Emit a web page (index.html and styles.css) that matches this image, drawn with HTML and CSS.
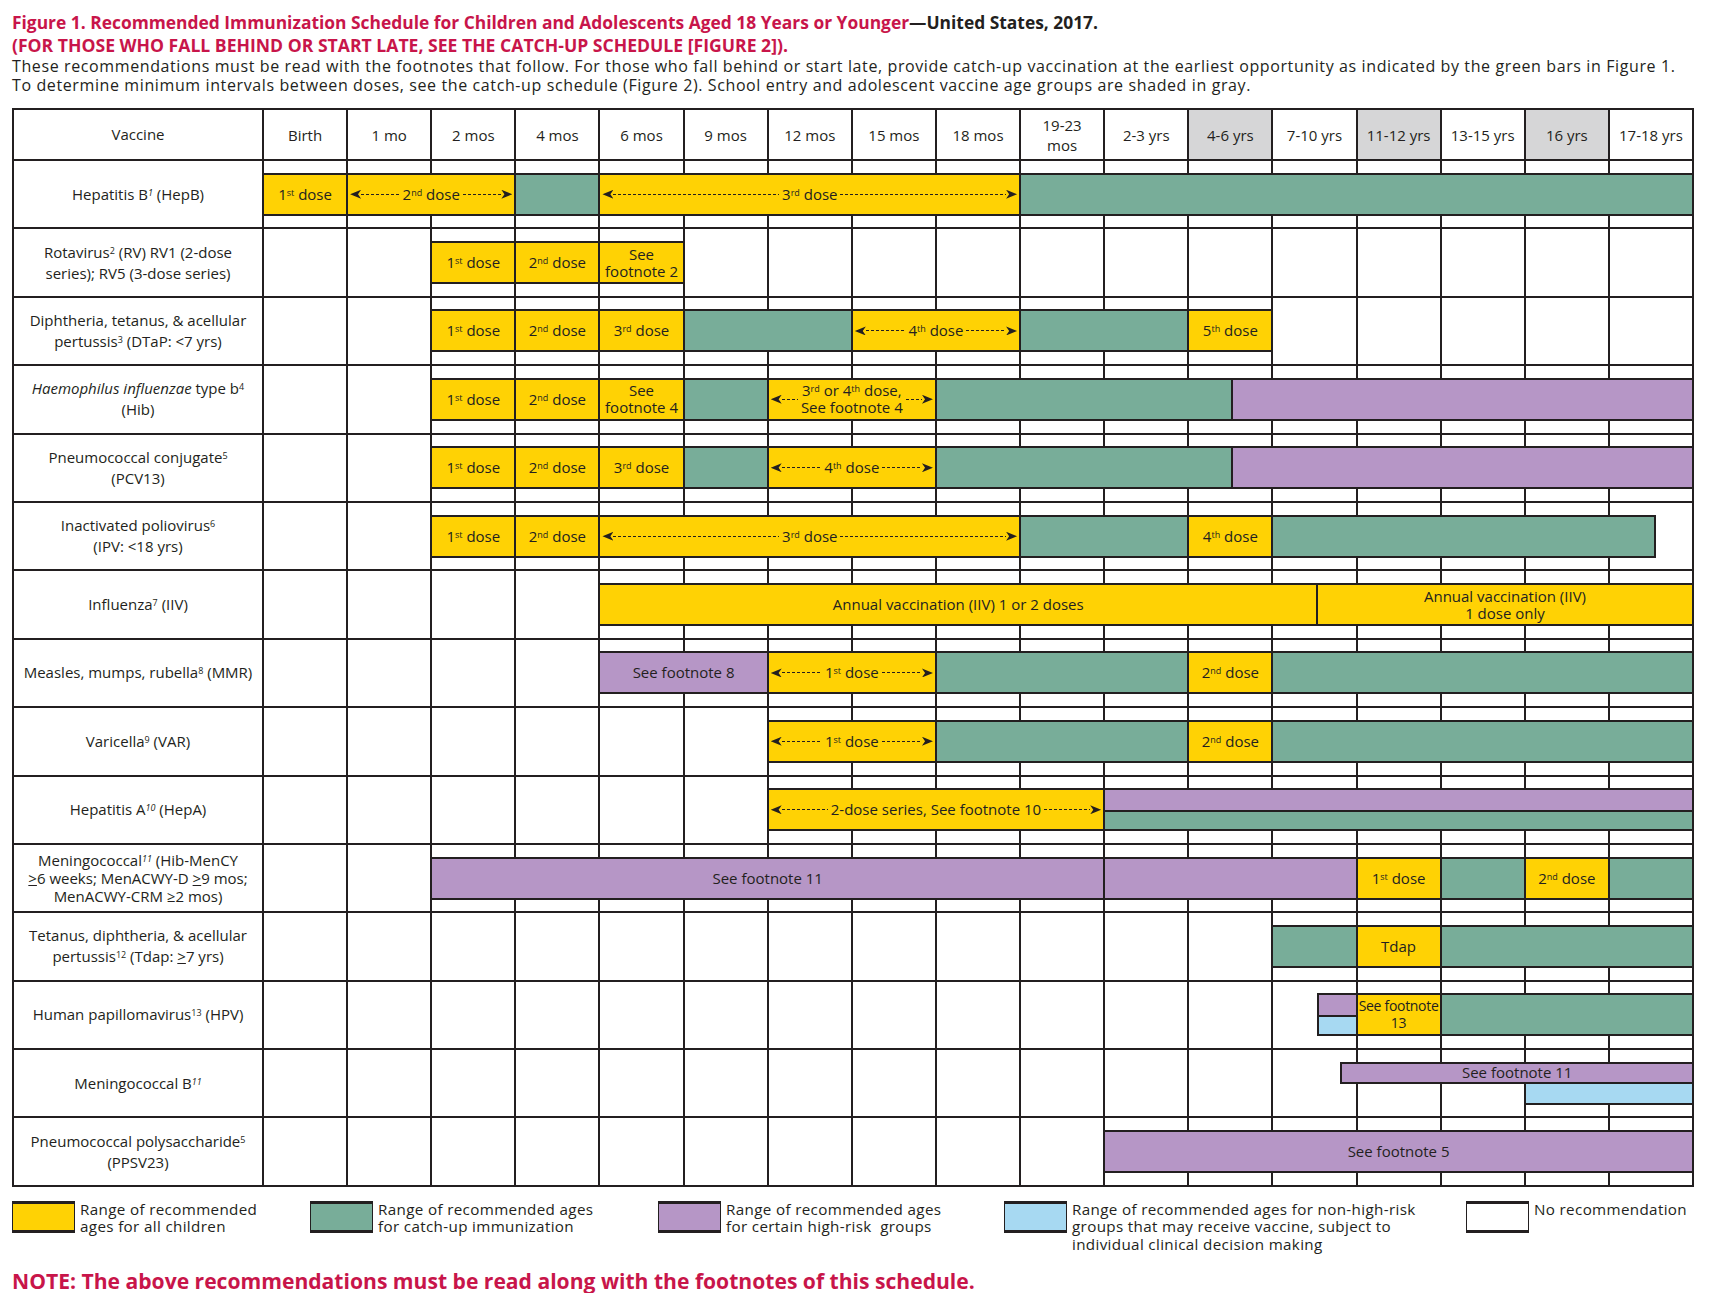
FILE: index.html
```html
<!DOCTYPE html>
<html lang="en">
<head>
<meta charset="utf-8">
<title>Recommended Immunization Schedule 2017</title>
<link rel="stylesheet" href="styles.css">
</head>
<body>
<div class="page">
  <h1 class="title"><span class="red">Figure 1. Recommended Immunization Schedule for Children and Adolescents Aged 18 Years or Younger</span>—United States, 2017.</h1>
  <p class="subtitle">(FOR THOSE WHO FALL BEHIND OR START LATE, SEE THE CATCH-UP SCHEDULE [FIGURE 2]).</p>
  <p class="intro">These recommendations must be read with the footnotes that follow. For those who fall behind or start late, provide catch-up vaccination at the earliest opportunity as indicated by the green bars in Figure 1.<br>To determine minimum intervals between doses, see the catch-up schedule (Figure 2). School entry and adolescent vaccine age groups are shaded in gray.</p>

  <div class="schedule">
    <div class="row head">
      <div class="name"><span>Vaccine</span></div>
      <div class="age"><span>Birth</span></div>
      <div class="age"><span>1 mo</span></div>
      <div class="age"><span>2 mos</span></div>
      <div class="age"><span>4 mos</span></div>
      <div class="age"><span>6 mos</span></div>
      <div class="age"><span>9 mos</span></div>
      <div class="age"><span>12 mos</span></div>
      <div class="age"><span>15 mos</span></div>
      <div class="age"><span>18 mos</span></div>
      <div class="age"><span>19-23<br>mos</span></div>
      <div class="age"><span>2-3 yrs</span></div>
      <div class="age gray"><span>4-6 yrs</span></div>
      <div class="age"><span>7-10 yrs</span></div>
      <div class="age gray"><span>11-12 yrs</span></div>
      <div class="age"><span>13-15 yrs</span></div>
      <div class="age gray"><span>16 yrs</span></div>
      <div class="age"><span>17-18 yrs</span></div>
    </div>

    <div class="row">
      <div class="name"><span>Hepatitis B<sup><i>1</i></sup> (HepB)</span></div>
      <div class="bar y" style="grid-column:2/3"><span>1<sup>st</sup> dose</span></div>
      <div class="bar y arr" style="grid-column:3/5"><span class="d"></span><span class="t">2<sup>nd</sup> dose</span><span class="d"></span></div>
      <div class="bar g" style="grid-column:5/6"></div>
      <div class="bar y arr" style="grid-column:6/11"><span class="d"></span><span class="t">3<sup>rd</sup> dose</span><span class="d"></span></div>
      <div class="bar g" style="grid-column:11/19"></div>
    </div>

    <div class="row">
      <div class="name"><span>Rotavirus<sup>2</sup> (RV) RV1 (2-dose<br>series); RV5 (3-dose series)</span></div>
      <div class="bar y" style="grid-column:4/5"><span>1<sup>st</sup> dose</span></div>
      <div class="bar y" style="grid-column:5/6"><span>2<sup>nd</sup> dose</span></div>
      <div class="bar y" style="grid-column:6/7"><span>See<br>footnote 2</span></div>
    </div>

    <div class="row">
      <div class="name"><span>Diphtheria, tetanus, &amp; acellular<br>pertussis<sup>3</sup> (DTaP: &lt;7 yrs)</span></div>
      <div class="bar y" style="grid-column:4/5"><span>1<sup>st</sup> dose</span></div>
      <div class="bar y" style="grid-column:5/6"><span>2<sup>nd</sup> dose</span></div>
      <div class="bar y" style="grid-column:6/7"><span>3<sup>rd</sup> dose</span></div>
      <div class="bar g" style="grid-column:7/9"></div>
      <div class="bar y arr" style="grid-column:9/11"><span class="d"></span><span class="t">4<sup>th</sup> dose</span><span class="d"></span></div>
      <div class="bar g" style="grid-column:11/13"></div>
      <div class="bar y" style="grid-column:13/14"><span>5<sup>th</sup> dose</span></div>
    </div>

    <div class="row">
      <div class="name"><span><i>Haemophilus influenzae</i> type b<sup>4</sup><br>(Hib)</span></div>
      <div class="bar y" style="grid-column:4/5"><span>1<sup>st</sup> dose</span></div>
      <div class="bar y" style="grid-column:5/6"><span>2<sup>nd</sup> dose</span></div>
      <div class="bar y" style="grid-column:6/7"><span>See<br>footnote 4</span></div>
      <div class="bar g" style="grid-column:7/8"></div>
      <div class="bar y arr" style="grid-column:8/10"><span class="d"></span><span class="t">3<sup>rd</sup> or 4<sup>th</sup> dose,<br>See footnote 4</span><span class="d"></span></div>
      <div class="bar g half-end" style="grid-column:10/14"></div>
      <div class="bar p half-start" style="grid-column:13/19"></div>
    </div>

    <div class="row">
      <div class="name"><span>Pneumococcal conjugate<sup>5</sup><br>(PCV13)</span></div>
      <div class="bar y" style="grid-column:4/5"><span>1<sup>st</sup> dose</span></div>
      <div class="bar y" style="grid-column:5/6"><span>2<sup>nd</sup> dose</span></div>
      <div class="bar y" style="grid-column:6/7"><span>3<sup>rd</sup> dose</span></div>
      <div class="bar g" style="grid-column:7/8"></div>
      <div class="bar y arr" style="grid-column:8/10"><span class="d"></span><span class="t">4<sup>th</sup> dose</span><span class="d"></span></div>
      <div class="bar g half-end" style="grid-column:10/14"></div>
      <div class="bar p half-start" style="grid-column:13/19"></div>
    </div>

    <div class="row">
      <div class="name"><span>Inactivated poliovirus<sup>6</sup><br>(IPV: &lt;18 yrs)</span></div>
      <div class="bar y" style="grid-column:4/5"><span>1<sup>st</sup> dose</span></div>
      <div class="bar y" style="grid-column:5/6"><span>2<sup>nd</sup> dose</span></div>
      <div class="bar y arr" style="grid-column:6/11"><span class="d"></span><span class="t">3<sup>rd</sup> dose</span><span class="d"></span></div>
      <div class="bar g" style="grid-column:11/13"></div>
      <div class="bar y" style="grid-column:13/14"><span>4<sup>th</sup> dose</span></div>
      <div class="bar g ipv-end" style="grid-column:14/19"></div>
    </div>

    <div class="row">
      <div class="name"><span>Influenza<sup>7</sup> (IIV)</span></div>
      <div class="bar y iiv" style="grid-column:6/19">
        <div class="iiv-a"><span>Annual vaccination (IIV) 1 or 2 doses</span></div>
        <div class="iiv-b"><span>Annual vaccination (IIV)<br>1 dose only</span></div>
      </div>
    </div>

    <div class="row">
      <div class="name"><span>Measles, mumps, rubella<sup>8</sup> (MMR)</span></div>
      <div class="bar p" style="grid-column:6/8"><span>See footnote 8</span></div>
      <div class="bar y arr" style="grid-column:8/10"><span class="d"></span><span class="t">1<sup>st</sup> dose</span><span class="d"></span></div>
      <div class="bar g" style="grid-column:10/13"></div>
      <div class="bar y" style="grid-column:13/14"><span>2<sup>nd</sup> dose</span></div>
      <div class="bar g" style="grid-column:14/19"></div>
    </div>

    <div class="row">
      <div class="name"><span>Varicella<sup>9</sup> (VAR)</span></div>
      <div class="bar y arr" style="grid-column:8/10"><span class="d"></span><span class="t">1<sup>st</sup> dose</span><span class="d"></span></div>
      <div class="bar g" style="grid-column:10/13"></div>
      <div class="bar y" style="grid-column:13/14"><span>2<sup>nd</sup> dose</span></div>
      <div class="bar g" style="grid-column:14/19"></div>
    </div>

    <div class="row">
      <div class="name"><span>Hepatitis A<sup><i>10</i></sup> (HepA)</span></div>
      <div class="bar y arr" style="grid-column:8/12"><span class="d"></span><span class="t">2-dose series, See footnote 10</span><span class="d"></span></div>
      <div class="bar split" style="grid-column:12/19"><div class="top p"></div><div class="bot g"></div></div>
    </div>

    <div class="row">
      <div class="name tight"><span>Meningococcal<sup><i>11</i></sup> (Hib-MenCY<br><u>&gt;</u>6 weeks; MenACWY-D <u>&gt;</u>9 mos;<br>MenACWY-CRM ≥2 mos)</span></div>
      <div class="bar p" style="grid-column:4/12"><span>See footnote 11</span></div>
      <div class="bar p" style="grid-column:12/15"></div>
      <div class="bar y" style="grid-column:15/16"><span>1<sup>st</sup> dose</span></div>
      <div class="bar g" style="grid-column:16/17"></div>
      <div class="bar y" style="grid-column:17/18"><span>2<sup>nd</sup> dose</span></div>
      <div class="bar g" style="grid-column:18/19"></div>
    </div>

    <div class="row">
      <div class="name"><span>Tetanus, diphtheria, &amp; acellular<br>pertussis<sup>12</sup> (Tdap: <u>&gt;</u>7 yrs)</span></div>
      <div class="bar g" style="grid-column:14/15"></div>
      <div class="bar y" style="grid-column:15/16"><span>Tdap</span></div>
      <div class="bar g" style="grid-column:16/19"></div>
    </div>

    <div class="row">
      <div class="name"><span>Human papillomavirus<sup>13</sup> (HPV)</span></div>
      <div class="bar split hpv-start" style="grid-column:14/15"><div class="top p"></div><div class="bot b"></div></div>
      <div class="bar y narrow" style="grid-column:15/16"><span>See footnote<br>13</span></div>
      <div class="bar g" style="grid-column:16/19"></div>
    </div>

    <div class="row">
      <div class="name"><span>Meningococcal B<sup><i>11</i></sup></span></div>
      <div class="bar p menb-top" style="grid-column:14/19"><span>See footnote 11</span></div>
      <div class="bar b menb-bot" style="grid-column:17/19"></div>
    </div>

    <div class="row">
      <div class="name"><span>Pneumococcal polysaccharide<sup>5</sup><br>(PPSV23)</span></div>
      <div class="bar p" style="grid-column:12/19"><span>See footnote 5</span></div>
    </div>
  </div>

  <div class="legend">
    <div class="item"><span class="sw y"></span><span class="lt">Range of recommended<br>ages for all children</span></div>
    <div class="item"><span class="sw g"></span><span class="lt">Range of recommended ages<br>for catch-up immunization</span></div>
    <div class="item"><span class="sw p"></span><span class="lt">Range of recommended ages<br>for certain high-risk&nbsp; groups</span></div>
    <div class="item"><span class="sw b"></span><span class="lt">Range of recommended ages for non-high-risk<br>groups that may receive vaccine, subject to<br>individual clinical decision making</span></div>
    <div class="item"><span class="sw w"></span><span class="lt">No recommendation</span></div>
  </div>

  <p class="note">NOTE: The above recommendations must be read along with the footnotes of this schedule.</p>
</div>
</body>
</html>
```

FILE: styles.css
```css
:root {
  --line: #231f20;
  --yellow: #ffd204;
  --green: #78ad99;
  --purple: #b696c6;
  --blue: #a7d9f2;
  --gray: #d6d6d7;
  --red: #c8154a;
}

* { box-sizing: border-box; }

body {
  margin: 0;
  background: #fff;
  color: var(--line);
  font-family: "Open Sans", "Noto Sans", sans-serif;
}

.page {
  width: 1718px;
  padding: 11px 0 0 12px;
}

.title {
  margin: 0;
  font-size: 17.4px;
  line-height: 23px;
  font-weight: 700;
}

.red { color: var(--red); }

.subtitle {
  margin: 0;
  color: var(--red);
  font-size: 17.6px;
  line-height: 23px;
  font-weight: 700;
}

.intro {
  margin: 0;
  font-size: 16px;
  letter-spacing: 0.61px;
  line-height: 19px;
}

sup {
  font-size: 0.6em;
  line-height: 0;
  vertical-align: 0.5em;
}

/* ---------- schedule table ---------- */
.schedule {
  margin-top: 13px;
  width: 1682px;
  border: 2px solid var(--line);
  background: var(--line);
  display: flex;
  flex-direction: column;
  gap: 2px;
}

.row {
  display: grid;
  grid-template-columns: 248px repeat(17, 1fr);
  height: 66.4px;
  background:
    repeating-linear-gradient(90deg, var(--line) 0 2px, transparent 2px calc(100% / 17))
      248px 0 / calc(100% - 248px) 100% no-repeat,
    #fff;
  font-size: 15px;
}

.row.head {
  height: 49px;
  background: #fff;
}

.name {
  grid-row: 1;
  grid-column: 1;
  display: flex;
  align-items: center;
  justify-content: center;
  text-align: center;
  line-height: 21px;
  background: #fff;
  padding: 0 4px;
}

.name.tight { line-height: 18px; }

.age {
  grid-row: 1;
  border-left: 2px solid var(--line);
  display: flex;
  align-items: center;
  justify-content: center;
  text-align: center;
  line-height: 20px;
  white-space: nowrap;
}

.age.gray { background: var(--gray); }

/* ---------- bars ---------- */
.bar {
  grid-row: 1;
  align-self: center;
  height: 43px;
  border: 2px solid var(--line);
  border-right: 0;
  display: flex;
  align-items: center;
  justify-content: center;
  text-align: center;
  line-height: 17px;
  white-space: nowrap;
  min-width: 0;
}

.y { background: var(--yellow); }
.g { background: var(--green); }
.p { background: var(--purple); }
.b { background: var(--blue); }
.w { background: #fff; }

.arr { padding: 0 2px; }
.arr::before,
.arr::after {
  content: "";
  flex: 0 0 11px;
  height: 9px;
  background: var(--line);
}
.arr::before { clip-path: polygon(0 50%, 100% 0, 72% 50%, 100% 100%); }
.arr::after { clip-path: polygon(100% 50%, 0 0, 28% 50%, 0 100%); }

.arr .d {
  flex: 1;
  height: 1px;
  background: repeating-linear-gradient(90deg, var(--line) 0 3px, transparent 3px 5px);
  min-width: 6px;
}
.arr .t { padding: 0 3px; }

.half-end { margin-right: 40.4px; }
.half-start { margin-left: 43.7px; }

.ipv-end {
  margin-right: 36px;
  border-right: 2px solid var(--line);
}

.iiv { justify-content: flex-start; align-items: stretch; }
.iiv-a {
  flex: 0 0 715.5px;
  display: flex;
  align-items: center;
  justify-content: center;
}
.iiv-b {
  flex: 1;
  border-left: 2px solid var(--line);
  display: flex;
  align-items: center;
  justify-content: center;
}

.split {
  flex-direction: column;
  align-items: stretch;
  justify-content: flex-start;
}
.split .top {
  height: 21.5px;
  border-bottom: 2px solid var(--line);
}
.split .bot { flex: 1; }

.hpv-start { margin-left: 46px; }

.narrow {
  font-size: 14px;
  letter-spacing: -0.3px;
  line-height: 16.5px;
}

.menb-top {
  align-self: start;
  margin-top: 11.7px;
  height: 22px;
  margin-left: 69px;
}
.menb-bot {
  align-self: start;
  margin-top: 33.7px;
  height: 21px;
  border-top: 0;
}

/* ---------- legend ---------- */
.legend {
  margin-top: 14px;
  display: grid;
  grid-template-columns: 298px 348px 346px 462px 1fr;
  font-size: 15.2px;
  letter-spacing: 0.35px;
  line-height: 17.6px;
}

.item {
  display: flex;
  align-items: flex-start;
  gap: 5px;
}

.sw {
  flex: 0 0 63px;
  height: 32px;
  border-top: 3px solid var(--line);
  border-bottom: 3px solid var(--line);
  border-left: 1px solid var(--line);
  border-right: 1px solid var(--line);
}

.note {
  margin: 15.5px 0 0;
  color: var(--red);
  font-size: 21.1px;
  line-height: 24px;
  font-weight: 700;
}
```
